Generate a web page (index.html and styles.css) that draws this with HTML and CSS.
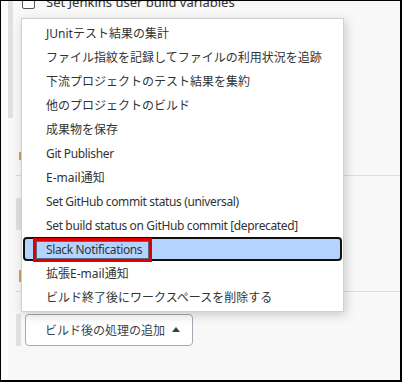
FILE: index.html
```html
<!DOCTYPE html>
<html lang="ja">
<head>
<meta charset="utf-8">
<link rel="stylesheet" href="styles.css">
</head>
<body>
<div class="frame">
  <div class="gutter"></div>
  <div class="content">
    <div class="env">
      <label class="check-row"><span class="checkbox"></span><span class="check-label">Set Jenkins user build variables</span></label>
    </div>
    <div class="post">
      <div class="row row-a"><span class="tan tan-a"></span></div>
      <div class="row row-b"><span class="gray-block"></span><span class="tan tan-b"></span></div>
      <div class="row row-c">
        <span class="gray-bar"></span>
        <button class="add-btn" type="button">ビルド後の処理の追加<svg class="caret" width="8" height="5" viewBox="0 0 8 5"><path d="M0 5 L4 0 L8 5 Z" fill="#3a3f4a"/></svg></button>
      </div>
    </div>
  </div>
  <ul class="menu">
    <li class="item">JUnitテスト結果の集計</li>
    <li class="item">ファイル指紋を記録してファイルの利用状況を追跡</li>
    <li class="item">下流プロジェクトのテスト結果を集約</li>
    <li class="item">他のプロジェクトのビルド</li>
    <li class="item">成果物を保存</li>
    <li class="item latin">Git Publisher</li>
    <li class="item">E-mail通知</li>
    <li class="item latin">Set GitHub commit status (universal)</li>
    <li class="item latin">Set build status on GitHub commit [deprecated]</li>
    <li class="item item-active latin">Slack Notifications<span class="annot"></span></li>
    <li class="item">拡張E-mail通知</li>
    <li class="item">ビルド終了後にワークスペースを削除する</li>
  </ul>
</div>
</body>
</html>
```

FILE: styles.css
```css
html, body {
  margin: 0;
  padding: 0;
  background: #fff;
}

.frame {
  position: relative;
  width: 402px;
  height: 382px;
  box-sizing: border-box;
  border-style: solid;
  border-color: #000;
  border-width: 1px 2px 2px 1px;
  background: #f8f8f8;
  overflow: hidden;
  display: flex;
  font-family: "Noto Sans", "Noto Sans CJK JP", sans-serif;
  color: #333;
}

.latin {
  letter-spacing: -0.36px;
}

.gutter {
  width: 7px;
  flex: none;
  background: #fcfcfc;
}

.content {
  flex: 1;
  display: flex;
  flex-direction: column;
}

.env {
  height: 117px;
  border-left: 5px solid #e0e0e0;
  padding-left: 9px;
}

.check-row {
  display: flex;
  align-items: center;
  gap: 11px;
  margin-top: -10px;
  height: 22px;
}

.checkbox {
  width: 11px;
  height: 11px;
  border: 1px solid #555;
  border-radius: 2px;
  background: #fff;
  flex: none;
}

.check-label {
  font-size: 13px;
  color: #333;
}

.post {
  margin-left: 8px;
  flex: 1;
  display: flex;
  flex-direction: column;
}

.row {
  display: flex;
  flex-direction: column;
}

.row-a {
  height: 57px;
  border-bottom: 1px solid #dcdcdc;
}

.tan {
  display: block;
  width: 2px;
  background: #c9a46a;
  margin-left: 3px;
}

.tan-a {
  margin-top: 34px;
  height: 8px;
}

.row-b {
  height: 115px;
  border-bottom: 1px solid #dcdcdc;
}

.gray-block {
  display: block;
  width: 5px;
  height: 32px;
  margin-top: 22px;
  background: #e0e0e0;
}

.tan-b {
  margin-top: 40px;
  height: 12px;
}

.row-c {
  flex-direction: row;
  align-items: flex-start;
  gap: 4px;
  padding-top: 22px;
}

.gray-bar {
  display: block;
  width: 5px;
  height: 32px;
  background: #e0e0e0;
}

.add-btn {
  width: 168px;
  height: 32px;
  box-sizing: border-box;
  background: #fff;
  border: 1px solid #a4abb3;
  border-radius: 4px;
  font-family: "Noto Sans", "Noto Sans CJK JP", sans-serif;
  font-size: 12px;
  color: #3a3f4a;
  display: flex;
  align-items: center;
  padding: 0 0 0 19px;
  gap: 7px;
}

.caret {
  display: block;
  margin-top: -1px;
}

.menu {
  position: absolute;
  left: 20px;
  top: 17px;
  width: 323px;
  height: 294px;
  box-sizing: border-box;
  margin: 0;
  padding: 2px 1px;
  list-style: none;
  background: #fff;
  border: 1px solid #d0d0d0;
  box-shadow: 2px 3px 10px rgba(0, 0, 0, 0.18);
}

.item {
  position: relative;
  height: 24px;
  display: flex;
  align-items: center;
  padding-left: 23px;
  font-size: 12px;
  color: #333;
  white-space: nowrap;
}

.item-active {
  background: #b5d3ff;
  border: 2px solid #111;
  border-radius: 4px;
  padding-left: 21px;
  box-sizing: border-box;
}

.annot {
  position: absolute;
  left: 8px;
  top: -1px;
  width: 119px;
  height: 24px;
  box-sizing: border-box;
  border: 3px solid #e00000;
  box-shadow: inset 0 0 0 1px rgba(0, 0, 0, 0.5);
}
```
